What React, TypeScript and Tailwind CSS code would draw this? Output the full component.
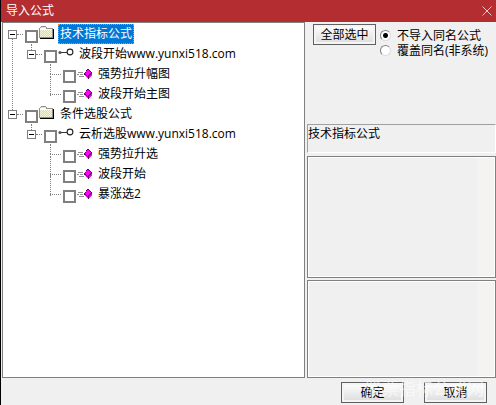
import { useState } from "react";

interface TreeItem {
    label: string;
    children?: TreeItem[];
}

const tree: TreeItem[] = [
    {
        label: "技术指标公式",
        children: [
            {
                label: "波段开始www.yunxi518.com",
                children: [{ label: "强势拉升幅图" }, { label: "波段开始主图" }],
            },
        ],
    },
    {
        label: "条件选股公式",
        children: [
            {
                label: "云析选股www.yunxi518.com",
                children: [{ label: "强势拉升选" }, { label: "波段开始" }, { label: "暴涨选2" }],
            },
        ],
    },
];

function FolderIcon() {
    return (
        <svg width="16" height="16" viewBox="0 0 16 16" shapeRendering="crispEdges" aria-hidden="true">
            <defs>
                <pattern id="dither" width="2" height="2" patternUnits="userSpaceOnUse">
                    <rect width="2" height="2" fill="#f4f4d8" />
                    <rect width="1" height="1" fill="#f0f000" />
                    <rect x="1" y="1" width="1" height="1" fill="#f0f000" />
                </pattern>
            </defs>
            <path d="M1 12h13V3h1v10H1z" fill="#000" />
            <path d="M0 2h1V1h1V0h5v1h1v1h6v10H0z" fill="#909090" />
            <path d="M2 1h5v1H2z" fill="#e8e8c0" />
            <path d="M1 3h12v8H1z" fill="url(#dither)" />
            <path d="M1 2h6v1H1zM1 3h12v1H1z" fill="#fff" />
        </svg>
    );
}

function NodeIcon() {
    return (
        <svg width="16" height="16" viewBox="0 0 16 16" aria-hidden="true">
            <path d="M2 6.5h7" stroke="#333" />
            <circle cx="2" cy="6.5" r="1.6" fill="#555" />
            <circle cx="12" cy="6" r="2.9" fill="#fff" stroke="#222" strokeWidth="1.1" />
        </svg>
    );
}

function FormulaIcon() {
    return (
        <svg width="16" height="16" viewBox="0 0 16 16" shapeRendering="crispEdges" aria-hidden="true">
            <path d="M1 6.5h5M0 8.5h2M3 8.5h3M2 10.5h5" stroke="#909090" />
            <path d="M10 3h2v1h1v1h1v1h1v4h-1v1h-1v1h-1v1h-1v-1h-1v-1H9v-1H8v-1H7V7h1V6h1V4h1z" fill="#600060" />
            <path d="M10 4h2v1h1v1h1v1h-1v1h-1v1h-1v1h-1V9H9V8H8V7h1V5h1z" fill="#ff00ff" />
            <path d="M8 9h1v1h1v1h1v1h-1v-1H9v-1H8zM12 10h1V9h1V8h1v2h-1v1h-1v1h-1z" fill="#ff00ff" />
        </svg>
    );
}

interface TreeNodeProps {
    item: TreeItem;
    level: number;
    last: boolean;
    selected: string;
    onSelect: (label: string) => void;
}

function TreeNode({ item, level, last, selected, onSelect }: TreeNodeProps) {
    const [open, setOpen] = useState(true);
    const active = selected === item.label;

    return (
        <li className="relative">
            {!last && <span className="absolute top-3 left-1 h-full border-l border-dotted border-[#808080]" />}
            <div className="flex h-5 items-center">
                <span className="flex w-[17px] shrink-0 items-center">
                    {item.children ? (
                        <button
                            type="button"
                            aria-label={item.label}
                            onClick={() => setOpen(!open)}
                            className="z-10 flex size-[9px] items-center justify-center border border-[#808080] bg-white"
                        >
                            <span className="h-px w-[5px] bg-black" />
                        </button>
                    ) : (
                        <span className="w-1" />
                    )}
                    <span className="mr-0.5 h-px flex-1 border-t border-dotted border-[#808080]" />
                </span>
                <input
                    type="checkbox"
                    aria-label={item.label}
                    className="z-10 mt-1 size-[13px] shrink-0 appearance-none border-2 border-[#808080] bg-white checked:bg-[#808080]"
                />
                <span className="mr-1 ml-px shrink-0">
                    {level === 0 ? <FolderIcon /> : level === 1 ? <NodeIcon /> : <FormulaIcon />}
                </span>
                <button
                    type="button"
                    onClick={() => onSelect(item.label)}
                    className={
                        active
                            ? "-ml-px h-5 border border-dotted border-[#ff8728] bg-[#0078d7] px-px whitespace-nowrap text-white"
                            : "-ml-px h-5 border border-transparent px-px whitespace-nowrap"
                    }
                >
                    {item.label}
                </button>
            </div>
            {item.children && open && (
                <ul className="relative pl-[19px]">
                    <span className="absolute top-0 left-[23px] h-2.5 border-l border-dotted border-[#808080]" />
                    {item.children.map((child, i) => (
                        <TreeNode
                            key={child.label}
                            item={child}
                            level={level + 1}
                            last={i === item.children!.length - 1}
                            selected={selected}
                            onSelect={onSelect}
                        />
                    ))}
                </ul>
            )}
        </li>
    );
}

function DialogButton({ children }: { children: string }) {
    return (
        <button
            type="button"
            className="h-[21px] w-[63px] border border-[#606060] bg-linear-to-b from-white to-[#dcdcdc] text-center outline-2 -outline-offset-3 outline-[#f4f4f4]"
        >
            {children}
        </button>
    );
}

function ModeRadio({ label, checked }: { label: string; checked?: boolean }) {
    return (
        <label className="flex h-[15px] items-center gap-1.5 leading-[15px]">
            <input
                type="radio"
                name="mode"
                defaultChecked={checked}
                className="size-[11px] appearance-none rounded-full border border-t-[#808080] border-r-[#dcdcdc] border-b-[#dcdcdc] border-l-[#808080] bg-white checked:bg-[radial-gradient(circle,#000_2px,#fff_3px)]"
            />
            {label}
        </label>
    );
}

function PreviewPane({ className }: { className: string }) {
    return (
        <div className={`flex justify-end border border-[#808080] bg-white p-px ${className}`}>
            <div className="flex-1 bg-[#f0f0f0]" />
            <div className="w-[17px] bg-[#f4f3f1]" />
        </div>
    );
}

function App() {
    const [selected, setSelected] = useState("技术指标公式");

    return (
        <div className="flex min-h-screen flex-col border-l border-black bg-[#f0f0f0] font-['Open_Sans','Noto_Sans_CJK_SC',sans-serif] text-[12px] leading-[18px] text-black">
            <header className="flex h-[22px] items-center justify-between bg-[#b42e31] pr-1 pl-[5px] text-white">
                <h1>导入公式</h1>
                <button type="button" aria-label="关闭">
                    <svg width="10" height="10" viewBox="0 0 10 10" stroke="#e8c8c8" aria-hidden="true">
                        <path d="M.5.5l9 9M9.500.5l-9 9" />
                    </svg>
                </button>
            </header>
            <main className="flex flex-1 gap-0.5 pl-px">
                <section className="min-w-0 flex-[296] border border-[#808080] bg-white pt-px pl-[5px]">
                    <ul>
                        {tree.map((item, i) => (
                            <TreeNode
                                key={item.label}
                                item={item}
                                level={0}
                                last={i === tree.length - 1}
                                selected={selected}
                                onSelect={setSelected}
                            />
                        ))}
                    </ul>
                </section>
                <aside className="flex min-w-0 flex-[189] flex-col">
                    <div className="flex h-[102px] gap-1 pt-0.5 pl-1.5">
                        <DialogButton>全部选中</DialogButton>
                        <div className="flex flex-col pt-1 whitespace-nowrap">
                            <ModeRadio label="不导入同名公式" checked />
                            <ModeRadio label="覆盖同名(非系统)" />
                        </div>
                    </div>
                    <p className="mb-[3px] h-[29px] border border-[#a0a0a0] border-r-white border-b-white">{selected}</p>
                    <PreviewPane className="mb-0.5 flex-[122]" />
                    <PreviewPane className="flex-[98]" />
                </aside>
            </main>
            <footer className="relative flex h-[27px] items-center justify-end gap-5 pt-0.5 pr-[9px]">
                <DialogButton>确定</DialogButton>
                <DialogButton>取消</DialogButton>
                <span className="pointer-events-none absolute top-0.5 right-3 text-[17px] whitespace-nowrap text-white/60">
                    股票指标公式网
                </span>
            </footer>
        </div>
    );
}

export default App;
